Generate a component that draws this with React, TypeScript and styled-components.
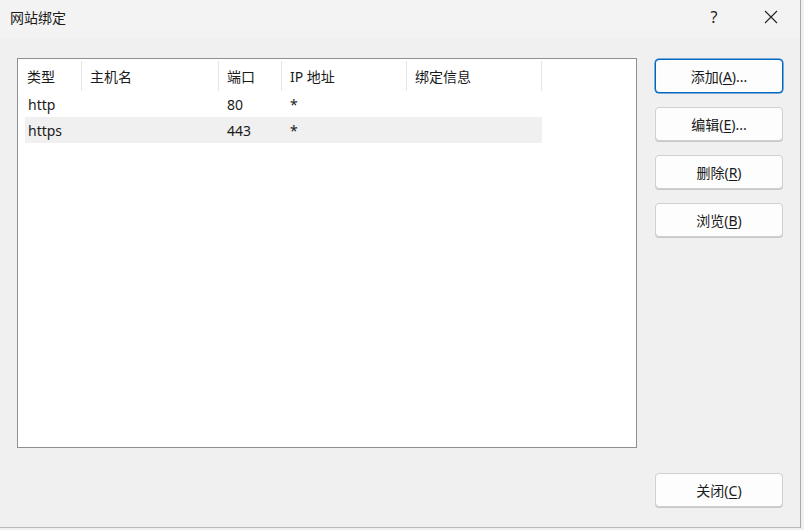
import React from 'react';
import styled, { createGlobalStyle } from 'styled-components';

const GlobalStyle = createGlobalStyle`
  html, body {
    margin: 0;
    padding: 0;
    background: #f0f0f0;
  }
  body {
    font-family: "Noto Sans", "Noto Sans CJK SC", sans-serif;
    font-size: 14px;
    color: #1a1a1a;
  }
`;

const Window = styled.div`
  width: 801px;
  height: 528px;
  box-sizing: border-box;
  border-right: 1px solid #a8a8a8;
  border-bottom: 1px solid #b8b8b8;
  background: #f0f0f0;
  display: flex;
  flex-direction: column;
`;

const TitleBar = styled.div`
  height: 38px;
  flex-shrink: 0;
  background: #f3f3f3;
  display: flex;
  align-items: center;
  padding-left: 10px;
  padding-right: 4px;
`;

const TitleText = styled.div`
  flex: 1;
  font-size: 14px;
  margin-top: -4px;
`;

const TitleButton = styled.div<{ $w: number }>`
  width: ${p => p.$w}px;
  height: 38px;
  display: flex;
  align-items: center;
  justify-content: center;
  margin-top: -4px;
  font-size: 16px;
  color: #222;
`;

const Body = styled.div`
  flex: 1;
  display: flex;
  padding: 20px 17px 20px 17px;
  gap: 18px;
`;

const LeftCol = styled.div`
  width: 620px;
  display: flex;
  flex-direction: column;
  padding-bottom: 59px;
`;

const ListBox = styled.div`
  flex: 1;
  background: #fff;
  border: 1px solid #8f8f8f;
  padding: 2px 0 0 7px;
  box-sizing: border-box;
`;

const Table = styled.div`
  width: 517px;
`;

const Row = styled.div<{ $alt?: boolean; $header?: boolean }>`
  display: grid;
  grid-template-columns: 57px 137px 63px 125px 135px;
  height: ${p => (p.$header ? 30 : 26)}px;
  background: ${p => (p.$alt ? '#f0f0f0' : 'transparent')};
`;

const Cell = styled.div<{ $header?: boolean }>`
  display: flex;
  align-items: center;
  padding-left: 3px;
  border-right: ${p => (p.$header ? '1px solid #e5e5e5' : 'none')};
  white-space: nowrap;
  color: #1a1a1a;
  font-size: 14px;
`;

const HeaderCell = styled(Cell)`
  &:first-child {
    padding-left: 2px;
  }
  &:not(:first-child) {
    padding-left: 8px;
  }
`;

const DataCell = styled(Cell)`
  &:not(:first-child) {
    padding-left: 8px;
  }
`;

const RightCol = styled.div`
  flex: 1;
  display: flex;
  flex-direction: column;
  padding-top: 1px;
  gap: 14px;
`;

const Spacer = styled.div`
  flex: 1;
`;

const Button = styled.button<{ $focused?: boolean }>`
  width: 128px;
  height: 34px;
  box-sizing: border-box;
  background: #fdfdfd;
  border: 1px solid ${p => (p.$focused ? '#0067c0' : '#d0d0d0')};
  box-shadow: ${p => (p.$focused ? 'inset 0 0 0 1px #fff, 0 0 0 0.5px #0067c0' : '0 1px 0 #c8c8c8')};
  border-radius: 4px;
  font-family: "Noto Sans", "Noto Sans CJK SC", sans-serif;
  font-size: 14px;
  color: #1a1a1a;
  padding: 0;
  display: flex;
  align-items: center;
  justify-content: center;
`;

const Key = styled.span`
  text-decoration: underline;
  text-underline-offset: 2px;
`;

const columns = ['类型', '主机名', '端口', 'IP 地址', '绑定信息'];

const bindings = [
  { type: 'http', host: '', port: '80', ip: '*', info: '' },
  { type: 'https', host: '', port: '443', ip: '*', info: '' },
];

const actions = [
  { label: '添加', key: 'A', dots: true },
  { label: '编辑', key: 'E', dots: true },
  { label: '删除', key: 'R', dots: false },
  { label: '浏览', key: 'B', dots: false },
];

const App: React.FC = () => {
  return (
    <>
      <GlobalStyle />
      <Window>
        <TitleBar>
          <TitleText>网站绑定</TitleText>
          <TitleButton $w={64}>?</TitleButton>
          <TitleButton $w={50}>
            <svg width="14" height="14" viewBox="0 0 14 14">
              <path d="M1 1 L13 13 M13 1 L1 13" stroke="#222" strokeWidth="1.1" />
            </svg>
          </TitleButton>
        </TitleBar>
        <Body>
          <LeftCol>
            <ListBox>
              <Table>
                <Row $header>
                  {columns.map(c => (
                    <HeaderCell key={c} $header>{c}</HeaderCell>
                  ))}
                </Row>
                {bindings.map((b, i) => (
                  <Row key={b.type} $alt={i % 2 === 1}>
                    <DataCell>{b.type}</DataCell>
                    <DataCell>{b.host}</DataCell>
                    <DataCell>{b.port}</DataCell>
                    <DataCell>{b.ip}</DataCell>
                    <DataCell>{b.info}</DataCell>
                  </Row>
                ))}
              </Table>
            </ListBox>
          </LeftCol>
          <RightCol>
            {actions.map((a, i) => (
              <Button key={a.key} $focused={i === 0}>
                {a.label}(<Key>{a.key}</Key>){a.dots ? '...' : ''}
              </Button>
            ))}
            <Spacer />
            <Button>
              关闭(<Key>C</Key>)
            </Button>
          </RightCol>
        </Body>
      </Window>
    </>
  );
};

export default App;
